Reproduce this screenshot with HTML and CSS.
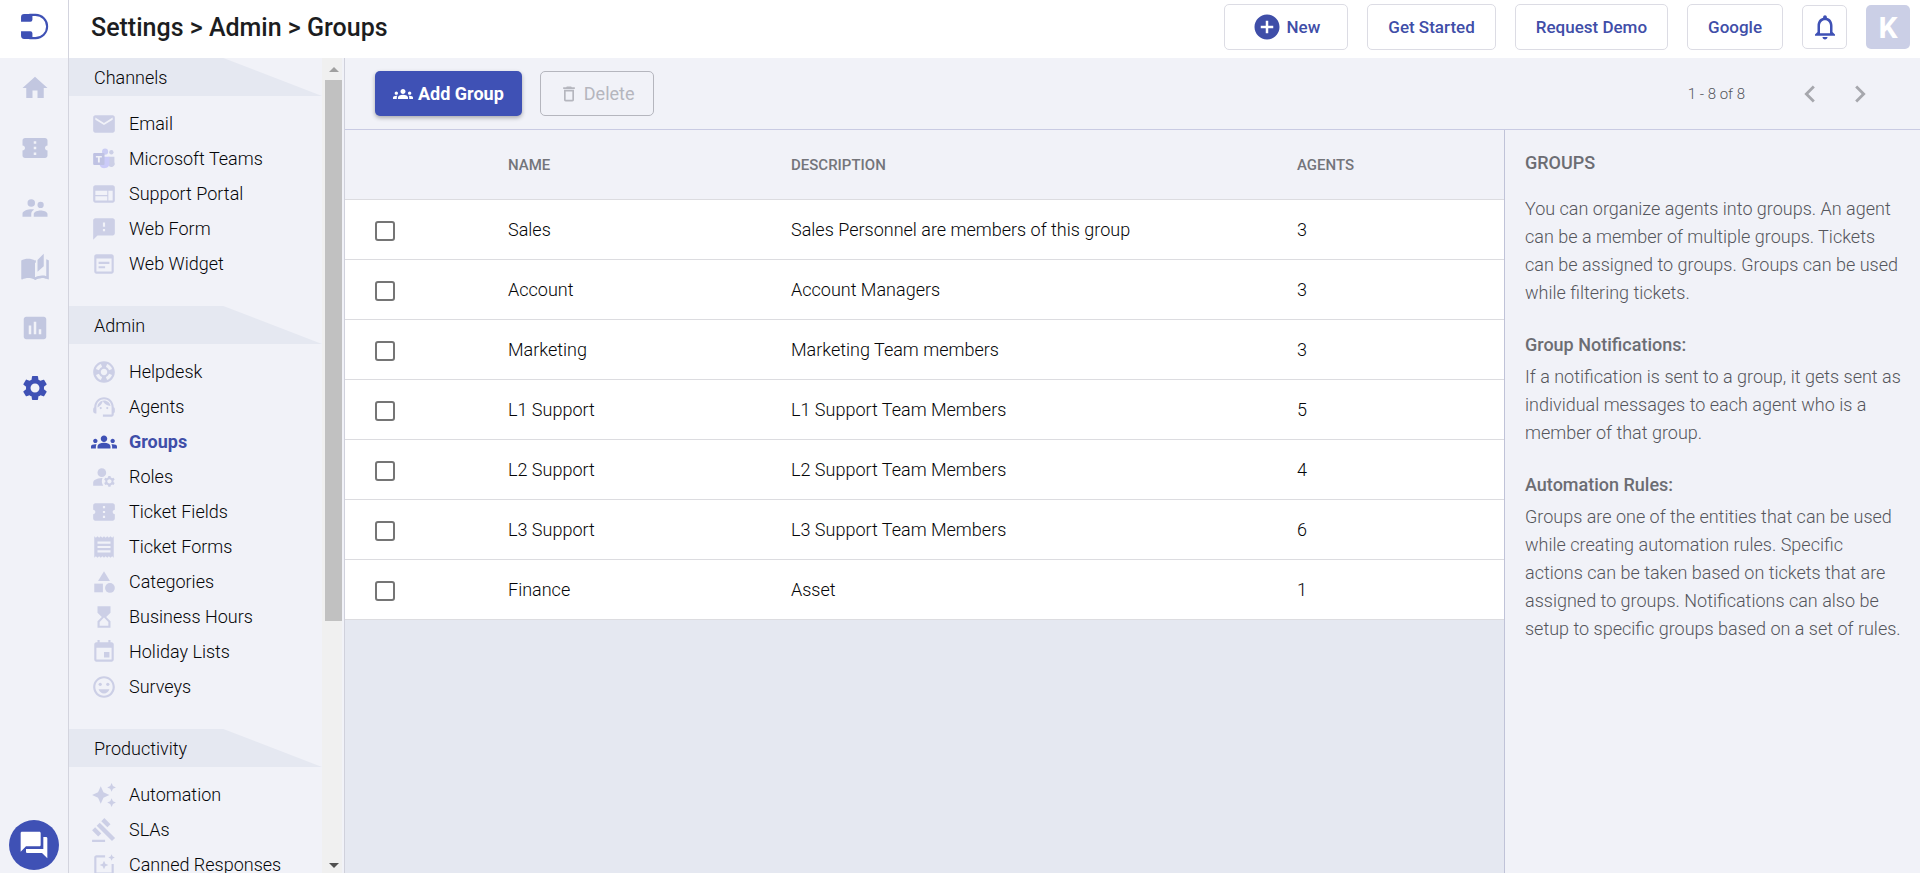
FILE: index.html
```html
<!DOCTYPE html>
<html lang="en">

<head>
    <meta charset="utf-8">
    <title>Groups</title>
    <link rel="stylesheet" href="styles.css">
</head>

<body>
    <svg class="sprite" aria-hidden="true">
        <symbol id="home" viewBox="0 0 24 24"><path d="M10 20v-6h4v6h5v-8h3L12 3 2 12h3v8z"/></symbol>
        <symbol id="ticket" viewBox="0 0 24 24"><path d="M22 10V6c0-1.11-.9-2-2-2H4c-1.1 0-1.99.89-1.99 2v4c1.1 0 1.99.9 1.99 2s-.89 2-2 2v4c0 1.1.9 2 2 2h16c1.1 0 2-.9 2-2v-4c-1.1 0-2-.9-2-2s.9-2 2-2zm-9 7.500h-2v-2h2v2zm0-4.500h-2v-2h2v2zm0-4.500h-2v-2h2v2z"/></symbol>
        <symbol id="people" viewBox="0 0 24 24"><path d="M16.500 12a2.500 2.500 0 1 0 0-5 2.500 2.500 0 0 0 0 5zM9 11a3 3 0 1 0 0-6 3 3 0 0 0 0 6zm7.500 3c-1.830 0-5.500.92-5.500 2.750V19h11v-2.250c0-1.830-3.670-2.750-5.500-2.750zM9 13c-2.330 0-7 1.170-7 3.500V19h7v-2.250c0-.85.33-2.340 2.370-3.470C10.500 13.100 9.660 13 9 13z"/></symbol>
        <symbol id="book" viewBox="0 0 24 24"><path d="M17.500 4.500c-1.950 0-4.050.4-5.500 1.500-1.450-1.100-3.550-1.500-5.500-1.500S2.450 4.900 1 6v14.650c0 .65.730.45.750.45C3.100 20.450 5.050 20 6.500 20c1.950 0 4.050.4 5.500 1.500 1.350-.85 3.800-1.500 5.500-1.500 1.650 0 3.350.3 4.750 1.050.41.210.75-.19.75-.45V6c-.6-.45-1.250-.75-2-1v13.500c-1.100-.35-2.300-.5-3.500-.5-1.700 0-4.150.65-5.500 1.500V8"/><path class="cut" d="M12.500 0H24v5.500h-1.200V22h-1.600v-3.500c-2.500-.6-5.500-.6-8.200.8z"/><path d="M19 .5l-5 5V15l5-4.500V.5zM21 5v13.500c-3-.9-6.500-.2-9 1v2c1.350-.85 3.800-1.500 5.500-1.500 1.650 0 3.350.3 4.750 1.050.41.210.75-.19.75-.45V6c-.6-.45-1.250-.75-2-1z"/></symbol>
        <symbol id="chart" viewBox="0 0 24 24"><path d="M19 3H5c-1.100 0-2 .9-2 2v14c0 1.100.9 2 2 2h14c1.100 0 2-.9 2-2V5c0-1.100-.9-2-2-2zM9 17H7v-7h2v7zm4 0h-2V7h2v10zm4 0h-2v-4h2v4z"/></symbol>
        <symbol id="settings" viewBox="0 0 24 24"><path d="M19.140 12.940c.04-.3.06-.61.06-.94 0-.32-.02-.64-.07-.94l2.030-1.580c.18-.14.23-.41.12-.61l-1.920-3.320c-.12-.22-.37-.29-.59-.22l-2.390.96c-.5-.38-1.030-.7-1.620-.94l-.36-2.540c-.04-.24-.24-.41-.48-.41h-3.840c-.24 0-.43.17-.47.41l-.36 2.540c-.59.24-1.130.57-1.620.94l-2.390-.96c-.22-.08-.47 0-.59.22L2.740 8.870c-.12.210-.08.470.12.610l2.030 1.580c-.05.300-.09.630-.09.940s.02.640.07.940l-2.030 1.580c-.18.140-.23.410-.12.610l1.920 3.320c.12.220.37.290.59.220l2.390-.96c.500.380 1.030.700 1.620.940l.360 2.540c.05.240.240.410.480.410h3.840c.240 0 .440-.170.470-.410l.360-2.540c.590-.240 1.130-.560 1.620-.940l2.390.960c.220.080.470 0 .590-.220l1.920-3.320c.120-.220.070-.470-.120-.610l-2.010-1.580zM12 15.600c-1.980 0-3.600-1.620-3.600-3.600s1.620-3.600 3.600-3.600 3.600 1.620 3.600 3.600-1.620 3.600-3.600 3.600z"/></symbol>
        <symbol id="email" viewBox="0 0 24 24"><path d="M20 4H4c-1.100 0-1.990.9-1.990 2L2 18c0 1.100.9 2 2 2h16c1.100 0 2-.9 2-2V6c0-1.100-.9-2-2-2zm0 4l-8 5-8-5V6l8 5 8-5v2z"/></symbol>
        <symbol id="teams" viewBox="0 0 24 24"><circle cx="13" cy="5.200" r="2.800" fill="#cbcdf3"/><circle cx="18.800" cy="5.800" r="2"/><path d="M16 10h5.600v5a3 3 0 0 1-5.600 2.500z"/><path d="M8 10h9v6.500a4.700 4.700 0 0 1-9 1z" fill="#cbcbf8"/><rect x="2" y="6.500" width="10.500" height="11" rx="1" fill="#bfc2e3"/><path d="M4.500 9.200h5.500v1.500H8.100v4.600H6.400v-4.600H4.500z" fill="#f1f2f8"/></symbol>
        <symbol id="portal" viewBox="0 0 24 24"><path d="M20 4H4c-1.100 0-1.990.9-1.990 2L2 18c0 1.100.9 2 2 2h16c1.100 0 2-.9 2-2V6c0-1.100-.9-2-2-2zm-5 14H4v-4h11v4zm0-5H4V9h11v4zm5 5h-4V9h4v9z"/></symbol>
        <symbol id="form" viewBox="0 0 24 24"><path d="M20 2H4c-1.100 0-1.990.9-1.990 2L2 22l4-4h14c1.100 0 2-.9 2-2V4c0-1.100-.9-2-2-2zm-7 12h-2v-2h2v2zm0-4h-2V6h2v4z"/></symbol>
        <symbol id="widget" viewBox="0 0 24 24"><path d="M19 3H5c-1.110 0-2 .9-2 2v14c0 1.100.89 2 2 2h14c1.100 0 2-.9 2-2V5c0-1.100-.9-2-2-2zm0 16H5V7h14v12zm-2-7H7v-2h10v2zm-4 4H7v-2h6v2z"/></symbol>
        <symbol id="helpdesk" viewBox="0 0 24 24"><path fill-rule="evenodd" d="M12 2C6.480 2 2 6.480 2 12s4.480 10 10 10 10-4.480 10-10S17.520 2 12 2zm7.460 7.120l-2.780 1.150c-.51-1.360-1.580-2.440-2.950-2.940l1.150-2.780c2.100.800 3.770 2.470 4.580 4.570zM12 15c-1.660 0-3-1.340-3-3s1.340-3 3-3 3 1.340 3 3-1.340 3-3 3zM9.130 4.540l1.170 2.780c-1.380.500-2.470 1.590-2.980 2.970L4.540 9.130c.810-2.110 2.480-3.780 4.590-4.590zM4.540 14.870l2.780-1.150c.510 1.380 1.590 2.460 2.970 2.960l-1.170 2.780c-2.100-.81-3.770-2.480-4.580-4.590zm10.340 4.590l-1.150-2.780c1.370-.51 2.450-1.590 2.950-2.970l2.780 1.170c-.81 2.100-2.480 3.770-4.580 4.580z"/></symbol>
        <symbol id="agent" viewBox="0 0 24 24"><path d="M21 12.220C21 6.730 16.740 3 12 3c-4.690 0-9 3.650-9 9.280-.6.340-1 .98-1 1.720v2c0 1.100.9 2 2 2h1v-6.100c0-3.870 3.130-7 7-7s7 3.130 7 7V19h-8v2h8c1.100 0 2-.9 2-2v-1.220c.59-.31 1-.92 1-1.640v-2.300c0-.7-.41-1.310-1-1.620z"/><circle cx="9" cy="13" r="1"/><circle cx="15" cy="13" r="1"/><path d="M18 11.030C17.520 8.180 15.040 6 12.050 6c-3.030 0-6.290 2.510-6.030 6.450 2.470-1.010 4.330-3.210 4.860-5.890 1.310 2.630 4 4.440 7.120 4.470z"/></symbol>
        <symbol id="groups" viewBox="0 0 24 24"><path d="M12 12.750c1.630 0 3.070.39 4.240.9 1.080.48 1.760 1.560 1.760 2.730V18H6v-1.610c0-1.180.68-2.260 1.760-2.730 1.170-.52 2.610-.91 4.240-.91zM4 13c1.100 0 2-.9 2-2s-.9-2-2-2-2 .9-2 2 .9 2 2 2zm1.130 1.100C4.760 14.040 4.390 14 4 14c-.99 0-1.930.21-2.780.58C.48 14.900 0 15.620 0 16.430V18h4.500v-1.610c0-.83.23-1.610.63-2.290zM20 13c1.100 0 2-.9 2-2s-.9-2-2-2-2 .9-2 2 .9 2 2 2zm4 3.430c0-.81-.48-1.530-1.220-1.850C21.930 14.210 20.990 14 20 14c-.39 0-.76.04-1.130.1.400.68.630 1.460.630 2.290V18H24v-1.570zM12 6c1.660 0 3 1.340 3 3s-1.340 3-3 3-3-1.340-3-3 1.340-3 3-3z"/></symbol>
        <symbol id="roles" viewBox="0 0 24 24"><circle cx="10" cy="8" r="4"/><path d="M10.670 13.020C10.450 13.010 10.230 13 10 13c-2.420 0-4.680.67-6.610 1.820C2.510 15.340 2 16.320 2 17.350V20h9.260C10.470 18.870 10 17.490 10 16c0-1.070.25-2.070.67-2.980zM20.750 16c0-.22-.03-.42-.06-.63l1.140-1.010-1-1.730-1.450.49c-.32-.27-.68-.48-1.080-.63L18 11h-2l-.3 1.490c-.4.150-.76.360-1.080.630l-1.450-.49-1 1.730 1.140 1.010c-.03.210-.06.410-.06.630s.03.420.06.630l-1.140 1.010 1 1.730 1.450-.49c.32.270.68.480 1.080.630L16 21h2l.3-1.490c.4-.15.76-.36 1.080-.63l1.450.49 1-1.730-1.140-1.010c.03-.21.06-.41.06-.63zM17 18c-1.100 0-2-.9-2-2s.9-2 2-2 2 .9 2 2-.9 2-2 2z"/></symbol>
        <symbol id="receipt" viewBox="0 0 24 24"><path d="M18 17H6v-2h12v2zm0-4H6v-2h12v2zm0-4H6V7h12v2zM3 22l1.500-1.500L6 22l1.500-1.500L9 22l1.500-1.500L12 22l1.500-1.500L15 22l1.500-1.500L18 22l1.500-1.500L21 22V2l-1.500 1.500L18 2l-1.500 1.500L15 2l-1.500 1.500L12 2l-1.500 1.500L9 2 7.500 3.500 6 2 4.500 3.500 3 2v20z"/></symbol>
        <symbol id="category" viewBox="0 0 24 24"><path d="M12 2l-5.500 9h11z"/><circle cx="17.500" cy="17.500" r="4.500"/><path d="M3 13.500h8v8H3z"/></symbol>
        <symbol id="hourglass" viewBox="0 0 24 24"><path d="M6 2v6h.01L6 8.010 10 12l-4 4 .01.01H6V22h12v-5.990h-.01L18 16l-4-4 4-3.990-.01-.01H18V2H6zm10 14.500V20H8v-3.500l4-4 4 4z"/></symbol>
        <symbol id="calendar" viewBox="0 0 24 24"><path d="M17 12h-5v5h5v-5zM16 1v2H8V1H6v2H5c-1.110 0-1.990.9-1.990 2L3 19c0 1.100.89 2 2 2h14c1.100 0 2-.9 2-2V5c0-1.100-.9-2-2-2h-1V1h-2zm3 18H5V8h14v11z"/></symbol>
        <symbol id="smile" viewBox="0 0 24 24"><path d="M11.990 2C6.470 2 2 6.480 2 12s4.470 10 9.990 10C17.520 22 22 17.520 22 12S17.520 2 11.990 2zM12 20c-4.420 0-8-3.580-8-8s3.580-8 8-8 8 3.580 8 8-3.580 8-8 8z"/><circle cx="8.500" cy="9.500" r="1.500"/><circle cx="15.500" cy="9.500" r="1.500"/><path d="M12 18c2.280 0 4.220-1.660 5-4H7c.780 2.340 2.720 4 5 4z"/></symbol>
        <symbol id="sparkle" viewBox="0 0 24 24"><path d="M19 9l1.250-2.750L23 5l-2.750-1.250L19 1l-1.250 2.750L15 5l2.750 1.250L19 9zm-7.500.5L9 4 6.500 9.500 1 12l5.500 2.500L9 20l2.500-5.500L17 12l-5.500-2.500zM19 15l-1.250 2.750L15 19l2.750 1.250L19 23l1.250-2.750L23 19l-2.750-1.250L19 15z"/></symbol>
        <symbol id="gavel" viewBox="0 0 24 24"><path d="M1 21h12v2H1zM5.240 8.070l2.830-2.830 14.140 14.140-2.830 2.830zM12.320 1l5.660 5.660-2.830 2.830-5.660-5.660zM3.830 9.480l5.660 5.660-2.830 2.830L1 12.310z"/></symbol>
        <symbol id="canned" viewBox="0 0 24 24"><path d="M19 11v8H5V5h8V3H5c-1.100 0-2 .9-2 2v14c0 1.100.9 2 2 2h14c1.100 0 2-.9 2-2v-8h-2z"/><path d="M19 8l.940-2.060L22 5l-2.060-.94L19 2l-.94 2.060L16 5l2.060.940zM12 8l-1.250 2.750L8 12l2.750 1.250L12 16l1.250-2.750L16 12l-2.750-1.250z"/></symbol>
        <symbol id="trash" viewBox="0 0 24 24"><path d="M6 19c0 1.100.9 2 2 2h8c1.100 0 2-.9 2-2V7H6v12zM8 9h8v10H8V9zm7.500-5l-1-1h-5l-1 1H5v2h14V4z"/></symbol>
        <symbol id="bell" viewBox="0 0 24 24"><path d="M12 22c1.100 0 2-.9 2-2h-4c0 1.100.9 2 2 2zm6-6v-5c0-3.070-1.630-5.640-4.500-6.320V4c0-.83-.67-1.500-1.500-1.500s-1.500.67-1.500 1.500v.68C7.640 5.360 6 7.920 6 11v5l-2 2v1h16v-1l-2-2zm-2 1H8v-6c0-2.480 1.510-4.500 4-4.500s4 2.020 4 4.500v6z"/></symbol>
        <symbol id="plus" viewBox="0 0 24 24"><path d="M12 2C6.480 2 2 6.480 2 12s4.480 10 10 10 10-4.480 10-10S17.520 2 12 2zm5 11h-4v4h-2v-4H7v-2h4V7h2v4h4v2z"/></symbol>
        <symbol id="left" viewBox="0 0 24 24"><path d="M15.410 7.410L14 6l-6 6 6 6 1.410-1.410L10.830 12z"/></symbol>
        <symbol id="right" viewBox="0 0 24 24"><path d="M10 6L8.590 7.410 13.170 12l-4.580 4.590L10 18l6-6z"/></symbol>
        <symbol id="chat" viewBox="0 0 24 24"><path d="M21 6h-2v9H6v2c0 .55.45 1 1 1h11l4 4V7c0-.55-.45-1-1-1zm-4 6V3c0-.55-.45-1-1-1H3c-.55 0-1 .45-1 1v14l4-4h10c.55 0 1-.45 1-1z"/></symbol>
    </svg>

    <header class="header">
        <a class="logo" href="#" aria-label="Dashboard">
            <svg viewBox="0 0 28 26"><path class="logo-line" d="M9 1.800h6a11.200 11.200 0 0 1 0 22.400H9"/><path d="M4 1h8v5.500a2 2 0 0 1-2 2H1V4a3 3 0 0 1 3-3zM1 17.500h9a2 2 0 0 1 2 2V25H4a3 3 0 0 1-3-3z"/></svg>
        </a>
        <h1 class="title">Settings &gt; Admin &gt; Groups</h1>
        <div class="actions">
            <button class="button button-new"><svg><use href="#plus"/></svg>New</button>
            <button class="button">Get Started</button>
            <button class="button">Request Demo</button>
            <button class="button">Google</button>
            <button class="bell" aria-label="Notifications"><svg><use href="#bell"/></svg></button>
            <button class="avatar">K</button>
        </div>
    </header>

    <div class="page">
        <nav class="rail">
            <a href="#" aria-label="Home"><svg><use href="#home"/></svg></a>
            <a href="#" aria-label="Tickets"><svg><use href="#ticket"/></svg></a>
            <a href="#" aria-label="Contacts"><svg><use href="#people"/></svg></a>
            <a href="#" aria-label="Knowledge base"><svg><use href="#book"/></svg></a>
            <a href="#" aria-label="Reports"><svg><use href="#chart"/></svg></a>
            <a class="active" href="#" aria-label="Settings"><svg><use href="#settings"/></svg></a>
            <button class="chat" aria-label="Chat"><svg><use href="#chat"/></svg></button>
        </nav>

        <div class="sidebar">
            <nav class="menu">
                <h2>Channels</h2>
                <ul>
                    <li><a href="#"><svg><use href="#email"/></svg>Email</a></li>
                    <li><a href="#"><svg><use href="#teams"/></svg>Microsoft Teams</a></li>
                    <li><a href="#"><svg><use href="#portal"/></svg>Support Portal</a></li>
                    <li><a href="#"><svg><use href="#form"/></svg>Web Form</a></li>
                    <li><a href="#"><svg><use href="#widget"/></svg>Web Widget</a></li>
                </ul>
                <h2>Admin</h2>
                <ul>
                    <li><a href="#"><svg><use href="#helpdesk"/></svg>Helpdesk</a></li>
                    <li><a href="#"><svg><use href="#agent"/></svg>Agents</a></li>
                    <li><a class="active" href="#"><svg><use href="#groups"/></svg>Groups</a></li>
                    <li><a href="#"><svg><use href="#roles"/></svg>Roles</a></li>
                    <li><a href="#"><svg><use href="#ticket"/></svg>Ticket Fields</a></li>
                    <li><a href="#"><svg><use href="#receipt"/></svg>Ticket Forms</a></li>
                    <li><a href="#"><svg><use href="#category"/></svg>Categories</a></li>
                    <li><a href="#"><svg><use href="#hourglass"/></svg>Business Hours</a></li>
                    <li><a href="#"><svg><use href="#calendar"/></svg>Holiday Lists</a></li>
                    <li><a href="#"><svg><use href="#smile"/></svg>Surveys</a></li>
                </ul>
                <h2>Productivity</h2>
                <ul>
                    <li><a href="#"><svg><use href="#sparkle"/></svg>Automation</a></li>
                    <li><a href="#"><svg><use href="#gavel"/></svg>SLAs</a></li>
                    <li><a href="#"><svg><use href="#canned"/></svg>Canned Responses</a></li>
                </ul>
            </nav>
            <div class="scrollbar">
                <span class="arrow arrow-up"></span>
                <div class="track"><div class="thumb"></div></div>
                <span class="arrow arrow-down"></span>
            </div>
        </div>

        <main class="main">
            <div class="toolbar">
                <button class="add"><svg><use href="#groups"/></svg>Add Group</button>
                <button class="delete" disabled><svg><use href="#trash"/></svg>Delete</button>
                <span class="count">1 - 8 of 8</span>
                <button class="pager" aria-label="Previous"><svg><use href="#left"/></svg></button>
                <button class="pager" aria-label="Next"><svg><use href="#right"/></svg></button>
            </div>
            <div class="content">
                <div class="list">
                    <table>
                        <thead>
                            <tr><th class="check"></th><th class="name">Name</th><th class="description">Description</th><th>Agents</th></tr>
                        </thead>
                        <tbody>
                            <tr><td><input type="checkbox" aria-label="Sales"></td><td>Sales</td><td>Sales Personnel are members of this group</td><td>3</td></tr>
                            <tr><td><input type="checkbox" aria-label="Account"></td><td>Account</td><td>Account Managers</td><td>3</td></tr>
                            <tr><td><input type="checkbox" aria-label="Marketing"></td><td>Marketing</td><td>Marketing Team members</td><td>3</td></tr>
                            <tr><td><input type="checkbox" aria-label="L1 Support"></td><td>L1 Support</td><td>L1 Support Team Members</td><td>5</td></tr>
                            <tr><td><input type="checkbox" aria-label="L2 Support"></td><td>L2 Support</td><td>L2 Support Team Members</td><td>4</td></tr>
                            <tr><td><input type="checkbox" aria-label="L3 Support"></td><td>L3 Support</td><td>L3 Support Team Members</td><td>6</td></tr>
                            <tr><td><input type="checkbox" aria-label="Finance"></td><td>Finance</td><td>Asset</td><td>1</td></tr>
                        </tbody>
                    </table>
                </div>
                <aside class="help">
                    <h3>GROUPS</h3>
                    <p>You can organize agents into groups. An agent can be a member of multiple groups. Tickets can be assigned to groups. Groups can be used while filtering tickets.</p>
                    <h4>Group Notifications:</h4>
                    <p>If a notification is sent to a group, it gets sent as individual messages to each agent who is a member of that group.</p>
                    <h4>Automation Rules:</h4>
                    <p>Groups are one of the entities that can be used while creating automation rules. Specific actions can be taken based on tickets that are assigned to groups. Notifications can also be setup to specific groups based on a set of rules.</p>
                </aside>
            </div>
        </main>
    </div>
</body>

</html>
```
FILE: styles.css
```css
* {
    box-sizing: border-box;
}

body {
    display: flex;
    flex-direction: column;
    height: 100vh;
    margin: 0;
    overflow: hidden;
    font-family: Roboto, sans-serif;
    font-size: 18px;
    font-weight: 300;
    color: #050608;
    background-color: #e5e8f1;
}

button {
    padding: 0;
    font-family: inherit;
    font-size: 18px;
    cursor: pointer;
}

a {
    color: inherit;
    text-decoration: none;
}

svg {
    flex: none;
    fill: currentColor;
}

.sprite {
    display: none;
}

/* header */
.header {
    display: flex;
    flex: none;
    align-items: center;
    height: 58px;
    padding-right: 10px;
    background-color: white;
}

.logo {
    display: flex;
    align-items: center;
    align-self: stretch;
    width: 69px;
    padding: 0 0 5px 20px;
    color: #3f51b5;
    border-right: 1px solid #d3d4de;
}

.logo svg {
    width: 29px;
    height: 27px;
}

.logo-line {
    fill: none;
    stroke: currentColor;
    stroke-width: 2;
}

.title {
    flex: 1;
    margin: 0;
    padding: 0 0 4px 22px;
    font-size: 25px;
    font-weight: 500;
    color: #1c1d21;
}

.actions {
    display: flex;
    align-items: center;
    gap: 19px;
    padding-bottom: 4px;
}

.button {
    display: flex;
    align-items: center;
    justify-content: center;
    height: 46px;
    padding: 0 20px;
    font-size: 17px;
    font-weight: 500;
    color: #3f4ea8;
    background-color: white;
    border: 1px solid #dcdce4;
    border-radius: 5px;
}

.button-new {
    gap: 5px;
    padding: 0 27px;
}

.button svg {
    width: 30px;
    height: 30px;
}

.bell {
    display: flex;
    align-items: center;
    justify-content: center;
    width: 45px;
    height: 44px;
    color: #3f51b5;
    background-color: white;
    border: 1px solid #dcdce4;
    border-radius: 5px;
}

.bell svg {
    width: 30px;
    height: 30px;
}

.avatar {
    width: 44px;
    height: 44px;
    font-size: 30px;
    font-weight: 700;
    color: white;
    background-color: #cbcfe6;
    border: 0;
    border-radius: 5px;
}

/* left navigation */
.page {
    display: flex;
    flex: 1;
    min-height: 0;
}

.rail {
    display: flex;
    flex: none;
    flex-direction: column;
    align-items: center;
    width: 69px;
    color: #c2c7e0;
    background-color: #f1f2f8;
    border-right: 1px solid #d3d4de;
}

.rail a {
    display: flex;
    align-items: center;
    height: 60px;
    padding-left: 2px;
}

.rail a svg {
    width: 30px;
    height: 30px;
}

.rail .active {
    color: #3f51b5;
}

.cut {
    fill: #f1f2f8;
}

.chat {
    display: flex;
    align-items: center;
    justify-content: center;
    width: 50px;
    height: 50px;
    margin: auto 0 3px;
    color: white;
    background-color: #3f51b5;
    border: 0;
    border-radius: 50%;
}

.chat svg {
    width: 32px;
    height: 32px;
}

.sidebar {
    display: flex;
    flex: none;
    width: 276px;
    background-color: #f1f2f8;
    border-right: 1px solid #d0d1dc;
}

.menu {
    flex: 1;
    overflow: hidden;
}

.menu h2 {
    height: 38px;
    margin: 0;
    padding-left: 25px;
    font-size: 18px;
    font-weight: 300;
    line-height: 39px;
    background-color: #e5e8f1;
    clip-path: polygon(0 0, 61% 0, 100% 100%, 0 100%);
}

.menu ul {
    margin: 0;
    padding: 10px 0 25px;
    list-style: none;
}

.menu a {
    display: flex;
    align-items: center;
    gap: 12px;
    height: 35px;
    padding-left: 22px;
}

.menu svg {
    width: 26px;
    height: 26px;
    color: #cccfe6;
}

.menu .active {
    font-weight: 700;
    color: #3f4ea8;
}

.menu .active svg {
    color: #3f51b5;
}

.scrollbar {
    display: flex;
    flex-direction: column;
    width: 20px;
    margin-right: 2px;
    padding-left: 3px;
    background-color: #f0f0f0;
}

.arrow {
    align-self: center;
    border: 5px solid transparent;
}

.arrow-up {
    margin: 4px 0 8px;
    border-bottom-color: #a0a0a0;
}

.arrow-down {
    margin: 10px 0 0;
    border-top-color: #505050;
}

.track {
    flex: 1;
}

.thumb {
    height: 70%;
    background-color: #c1c1c1;
}

/* toolbar */
.main {
    display: flex;
    flex: 1;
    flex-direction: column;
    min-width: 0;
}

.toolbar {
    display: flex;
    align-items: center;
    height: 72px;
    padding: 0 35px 0 30px;
    background-color: #f1f2f8;
    border-bottom: 1px solid #c9cbe3;
}

.add,
.delete {
    display: flex;
    align-items: center;
    justify-content: center;
    height: 45px;
    padding: 0 18px;
    border-radius: 5px;
}

.add {
    gap: 5px;
    margin-right: 18px;
    font-weight: 700;
    color: white;
    background-color: #3f51b5;
    border: 0;
    box-shadow: 0 2px 4px rgba(0, 0, 0, 0.3);
}

.delete {
    gap: 5px;
    font-weight: 400;
    color: #b5b6be;
    background-color: transparent;
    border: 1px solid #b5b6be;
}

.add svg,
.delete svg {
    width: 20px;
    height: 20px;
}

.count {
    margin-left: auto;
    margin-right: 40px;
    font-size: 15px;
    color: #55565c;
}

.pager {
    display: flex;
    align-items: center;
    justify-content: center;
    width: 50px;
    height: 40px;
    color: #a6a7ad;
    background-color: transparent;
    border: 0;
}

.pager svg {
    width: 34px;
    height: 34px;
}

/* groups table */
.content {
    display: flex;
    flex: 1;
    min-height: 0;
}

.list {
    flex: 1;
}

table {
    width: 100%;
    table-layout: fixed;
    border-spacing: 0;
    background-color: white;
}

th,
td {
    height: 60px;
    padding: 0;
    text-align: left;
    border-bottom: 1px solid #dcdce0;
}

th {
    height: 70px;
    font-size: 15px;
    font-weight: 500;
    text-transform: uppercase;
    color: #74757b;
    background-color: #f1f2f8;
}

.check {
    width: 163px;
}

.name {
    width: 283px;
}

.description {
    width: 506px;
}

td:first-child {
    padding: 2px 0 0 30px;
}

input[type="checkbox"] {
    display: block;
    width: 20px;
    height: 20px;
    margin: 0;
    appearance: none;
    background-color: white;
    border: 2px solid #757575;
    border-radius: 3px;
}

/* help text */
.help {
    flex: none;
    width: 416px;
    padding: 19px 17px 19px 20px;
    line-height: 28px;
    color: #55565c;
    background-color: #f1f2f8;
    border-left: 1px solid #c0c3d8;
}

.help h3,
.help h4 {
    margin: 0;
    font-size: 18px;
    font-weight: 500;
    color: #6c6d73;
}

.help h3 {
    margin-bottom: 18px;
}

.help h4 {
    margin-bottom: 4px;
}

.help p {
    margin: 0 0 24px;
}
```
